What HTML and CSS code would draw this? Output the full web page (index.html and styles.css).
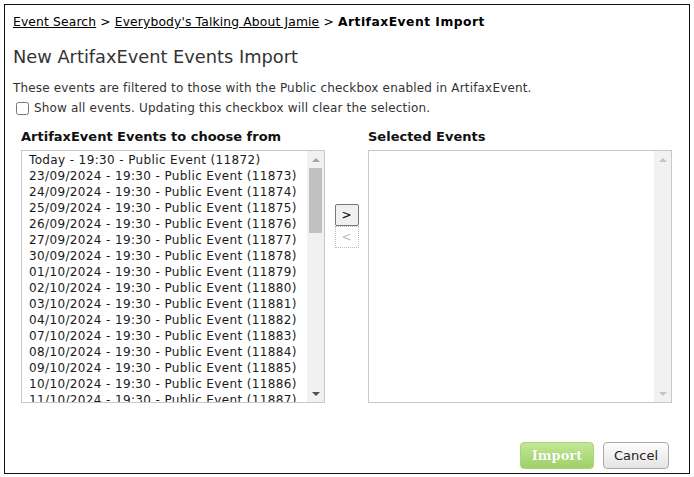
FILE: index.html
```html
<!DOCTYPE html>
<html lang="en">
<head>
  <meta charset="UTF-8" />
  <title>ArtifaxEvent Import</title>
  <link rel="stylesheet" href="styles.css">
</head>
<body>
  <div class="dialog">
    <div class="crumbs">
      <a href="#">Event Search</a> &gt;
      <a href="#">Everybody's Talking About Jamie</a> &gt;
      <b>ArtifaxEvent Import</b>
    </div>

    <h2 class="title">New ArtifaxEvent Events Import</h2>

    <p class="note">These events are filtered to those with the Public checkbox enabled in ArtifaxEvent.</p>
    <label class="show-all">
      <input type="checkbox" id="showAll"> Show all events. Updating this checkbox will clear the selection.
    </label>

    <div class="picker">
      <div class="col">
        <h3>ArtifaxEvent Events to choose from</h3>
        <div class="list">
          <div class="rows" id="available"></div>
          <div class="bar">
            <span class="arrow up"></span>
            <span class="track"><span class="thumb"></span></span>
            <span class="arrow down"></span>
          </div>
        </div>
      </div>
      <div class="moves">
        <button class="move">&gt;</button>
        <button class="move off">&lt;</button>
      </div>
      <div class="col">
        <h3>Selected Events</h3>
        <div class="list">
          <div class="rows" id="selected"></div>
          <div class="bar idle">
            <span class="arrow up"></span>
            <span class="track"></span>
            <span class="arrow down"></span>
          </div>
        </div>
      </div>
    </div>

    <div class="actions">
      <button class="import">Import</button>
      <button class="cancel">Cancel</button>
    </div>
  </div>

  <script>
    const available = document.getElementById("available");

    function addRow(text) {
      const row = document.createElement("div");
      row.className = "row";
      row.textContent = text;
      available.appendChild(row);
    }

    function pad(n) {
      return n < 10 ? "0" + n : "" + n;
    }

    addRow("Today - 19:30 - Public Event (11872)");

    // weekdays only, starting the Monday after today
    let day = new Date(2024, 8, 23);
    let id = 11873;
    while (id < 11888) {
      const dow = day.getDay();
      if (dow !== 0 && dow !== 6) {
        const label = pad(day.getDate()) + "/" + pad(day.getMonth() + 1) + "/" + day.getFullYear();
        addRow(label + " - 19:30 - Public Event (" + id + ")");
        id++;
      }
      day.setDate(day.getDate() + 1);
    }
  </script>
</body>
</html>
```

FILE: styles.css
```css
body {
  margin: 0;
  font-family: "DejaVu Sans", Verdana, sans-serif;
  font-size: 12px;
  color: #333;
  background: #fff;
}

.dialog {
  margin: 4px;
  width: 686px;
  height: 470px;
  box-sizing: border-box;
  border: 1px solid #111;
  padding: 8px 16px 4px 8px;
  display: flex;
  flex-direction: column;
}

.crumbs {
  font-size: 12.3px;
  color: #000;
  line-height: 16px;
  margin-top: 1px;
  letter-spacing: 0.15px;
}

.crumbs a {
  color: #000;
}

.crumbs b {
  letter-spacing: 0.5px;
}

.title {
  font-size: 17.8px;
  font-weight: normal;
  color: #333;
  margin: 15px 0 0;
  line-height: 24px;
}

.note {
  margin: 11px 0 0;
  line-height: 16px;
  letter-spacing: 0.17px;
}

.show-all {
  display: flex;
  align-items: center;
  margin-top: 4px;
  line-height: 16px;
  letter-spacing: 0.17px;
}

.show-all input {
  margin: 0 5px 0 3px;
  width: 13px;
  height: 13px;
}

.picker {
  display: flex;
  margin: 13px 0 0 8px;
}

.col {
  width: 304px;
  flex-shrink: 0;
}

.col h3 {
  font-size: 13px;
  color: #111;
  margin: 0 0 5px;
  line-height: 16px;
}

.list {
  height: 253px;
  box-sizing: border-box;
  border: 1px solid #c8c8c8;
  display: flex;
  background: #fff;
}

.rows {
  flex: 1;
  overflow: hidden;
  padding: 1px 0 0 7px;
  color: #1a1a1a;
  letter-spacing: 0.37px;
}

.row {
  line-height: 16px;
  white-space: nowrap;
}

.bar {
  width: 17px;
  background: #f1f1f1;
  display: flex;
  flex-direction: column;
}

.arrow {
  height: 17px;
  display: flex;
  align-items: center;
  justify-content: center;
}

.arrow::before {
  content: "";
  border-left: 4px solid transparent;
  border-right: 4px solid transparent;
}

.arrow.up::before {
  border-bottom: 4px solid #a3a3a3;
}

.arrow.down::before {
  border-top: 4px solid #505050;
}

.idle .arrow.up::before {
  border-bottom-color: #c4c4c4;
}

.idle .arrow.down::before {
  border-top-color: #c4c4c4;
}

.track {
  flex: 1;
  padding: 0 2px;
}

.thumb {
  display: block;
  height: 65px;
  background: #c1c1c1;
}

.moves {
  width: 43px;
  flex-shrink: 0;
  display: flex;
  flex-direction: column;
  align-items: center;
  padding-top: 75px;
}

.move {
  width: 24px;
  height: 22px;
  margin: 0;
  padding: 0;
  font-family: "DejaVu Sans", Verdana, sans-serif;
  font-size: 12px;
  color: #000;
  background: #f0f0f0;
  border: 1px solid #767676;
  border-radius: 2px;
}

.move.off {
  color: #bbb;
  background: #fff;
  border: 1px dotted #bbb;
  border-radius: 0;
}

.actions {
  margin-top: auto;
  padding-right: 4px;
  display: flex;
  justify-content: flex-end;
  gap: 9px;
}

.actions button {
  height: 27px;
  border-radius: 4px;
  font-size: 13px;
  padding: 0;
}

.import {
  font-family: "DejaVu Serif", Georgia, serif;
  font-weight: bold;
  color: #fff;
  background: linear-gradient(#c2e796, #9ed166);
  border: 1px solid #a8d67c;
  text-shadow: 0 0 1px #8cbc5a;
  width: 74px;
}

.cancel {
  font-family: "DejaVu Sans", Verdana, sans-serif;
  color: #222;
  background: linear-gradient(#fdfdfd, #e4e4e4);
  border: 1px solid #a9a9a9;
  width: 66px;
}
```
